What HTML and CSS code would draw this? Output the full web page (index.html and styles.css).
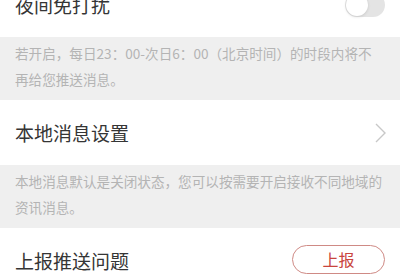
FILE: index.html
```html
<!DOCTYPE html>
<html lang="zh-CN">
<head>
<meta charset="utf-8">
<link rel="stylesheet" href="styles.css">
</head>
<body>
<div class="list">
  <div class="row">
    <span class="title">夜间免打扰</span>
    <span class="switch"><span class="knob"></span></span>
  </div>
  <div class="note">
    <p>若开启，每日23：00-次日6：00（北京时间）的时段内将不</p>
    <p>再给您推送消息。</p>
  </div>
  <div class="row">
    <span class="title">本地消息设置</span>
    <svg class="chev" width="11" height="20" viewBox="0 0 11 20"><path d="M1 1 L10 10 L1 19" fill="none" stroke="#c8c8c8" stroke-width="1.4"/></svg>
  </div>
  <div class="note">
    <p>本地消息默认是关闭状态，您可以按需要开启接收不同地域的</p>
    <p>资讯消息。</p>
  </div>
  <div class="row">
    <span class="title">上报推送问题</span>
    <span class="btn">上报</span>
  </div>
</div>
</body>
</html>
```
FILE: styles.css
```css
* { box-sizing: border-box; }
html, body {
  margin: 0;
  padding: 0;
  background: #fff;
  overflow: hidden;
}
body {
  width: 400px;
  height: 280px;
  font-family: "Noto Sans CJK SC", "Noto Sans", sans-serif;
}
.list {
  margin-top: -28px;
  display: flex;
  flex-direction: column;
}
.row {
  height: 65px;
  background: #fff;
  display: flex;
  align-items: center;
  justify-content: space-between;
  padding: 0 15px 0 15px;
}
.title {
  font-size: 19px;
  line-height: 24px;
  color: #353535;
}
.switch {
  position: relative;
  width: 40px;
  height: 24px;
  border-radius: 12px;
  background: #e4e4e4;
}
.knob {
  position: absolute;
  left: 1px;
  top: 1px;
  width: 22px;
  height: 22px;
  border-radius: 50%;
  background: #fff;
  box-shadow: 0 1px 3px rgba(0,0,0,0.12);
}
.chev {
  margin-right: -1px;
}
.note {
  height: 63px;
  background: #efefef;
  padding: 3px 15px 0 15px;
}
.note p {
  margin: 0;
  font-size: 13.6px;
  line-height: 26px;
  color: #b4b4b4;
  white-space: nowrap;
}
.btn {
  width: 93px;
  height: 29px;
  margin-top: -3px;
  border: 1px solid #cf8a85;
  border-radius: 15px;
  color: #c9453e;
  font-size: 16px;
  display: flex;
  align-items: center;
  justify-content: center;
}
```
